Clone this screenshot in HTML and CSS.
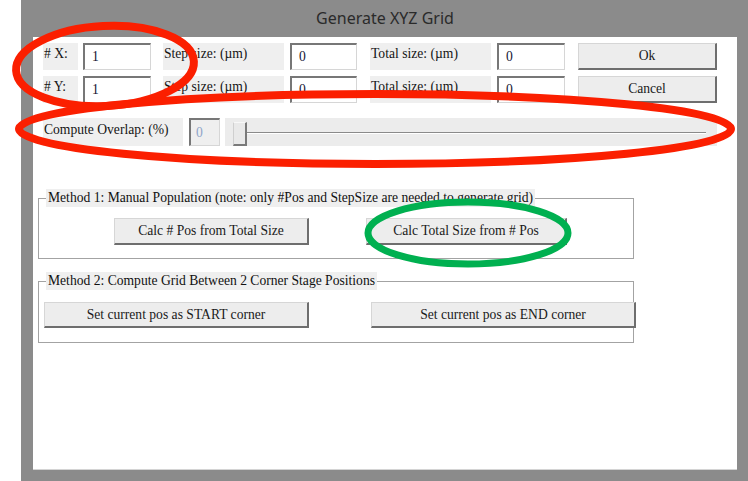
FILE: index.html
```html
<!DOCTYPE html>
<html>
<head>
<meta charset="utf-8">
<title>Generate XYZ Grid</title>
<link rel="stylesheet" href="styles.css">
</head>
<body>
<div class="window">
  <div class="titlebar">Generate XYZ Grid</div>
  <div class="client">
    <div class="row">
      <div class="lbl lbl-n"># X:</div>
      <div class="inp inp-n">1</div>
      <div class="lbl lbl-s">Step size: (µm)</div>
      <div class="inp inp-s">0</div>
      <div class="lbl lbl-t">Total size: (µm)</div>
      <div class="inp inp-t">0</div>
      <div class="btn btn-ok">Ok</div>
    </div>
    <div class="row row2">
      <div class="lbl lbl-n"># Y:</div>
      <div class="inp inp-n">1</div>
      <div class="lbl lbl-s">Step size: (µm)</div>
      <div class="inp inp-s">0</div>
      <div class="lbl lbl-t">Total size: (µm)</div>
      <div class="inp inp-t">0</div>
      <div class="btn btn-ok">Cancel</div>
    </div>
    <div class="row row3">
      <div class="lbl lbl-ov">Compute Overlap: (%)</div>
      <div class="inp inp-ov">0</div>
      <div class="slider">
        <div class="thumb"></div>
        <div class="track"></div>
      </div>
    </div>

    <fieldset class="group group1">
      <legend>Method 1: Manual Population (note: only #Pos and StepSize are needed to generate grid)</legend>
      <div class="btnrow">
        <div class="btn btn-calc1">Calc # Pos from Total Size</div>
        <div class="btn btn-calc2">Calc Total Size from # Pos</div>
      </div>
    </fieldset>

    <fieldset class="group group2">
      <legend>Method 2: Compute Grid Between 2 Corner Stage Positions</legend>
      <div class="btnrow btnrow2">
        <div class="btn btn-corner">Set current pos as START corner</div>
        <div class="btn btn-corner btn-end">Set current pos as END corner</div>
      </div>
    </fieldset>
  </div>
</div>

<svg class="marks" width="748" height="481" viewBox="0 0 748 481">
  <ellipse cx="105" cy="66" rx="89" ry="40" transform="rotate(-3 105 66)" fill="none" stroke="#fb1f00" stroke-width="8"/>
  <ellipse cx="375" cy="129" rx="356" ry="35" fill="none" stroke="#fb1f00" stroke-width="8"/>
  <ellipse cx="468" cy="233" rx="100" ry="31" fill="none" stroke="#00b050" stroke-width="7"/>
</svg>
</body>
</html>
```

FILE: styles.css
```css
html, body {
  margin: 0;
  padding: 0;
  background: #ffffff;
}

body {
  font-family: "Liberation Serif", "Times New Roman", serif;
  font-size: 13.6px;
  color: #1a1a1a;
}

.window {
  margin-left: 21px;
  width: 727px;
  height: 481px;
  box-sizing: border-box;
  background: #8b8b8b;
  padding: 0 11px 11px 12px;
  display: flex;
  flex-direction: column;
}

.titlebar {
  height: 37px;
  line-height: 37px;
  text-align: center;
  font-family: "Noto Sans", "Open Sans", sans-serif;
  font-size: 16px;
  color: #2a2a2a;
  flex-shrink: 0;
}

.client {
  flex: 1;
  background: #ffffff;
  border-bottom: 1px solid #d4d4d4;
  padding: 6px 0 0 10px;
}

.row {
  display: flex;
  height: 27px;
}

.row2 {
  margin-top: 6px;
}

.row3 {
  margin-top: 15px;
  height: 28px;
}

.lbl {
  background: #efefef;
  box-sizing: border-box;
  padding: 3px 0 0 1px;
  line-height: 15px;
  white-space: nowrap;
  overflow: hidden;
  color: #141414;
}

.inp {
  background: #ffffff;
  box-sizing: border-box;
  border-style: solid;
  border-width: 2px 1px 1px 2px;
  border-color: #777777 #d6d6d6 #d6d6d6 #777777;
  padding-left: 7px;
  line-height: 24px;
  color: #141432;
}

.lbl-n { width: 35px; margin-right: 5px; }
.inp-n { width: 68px; margin-right: 12px; }
.lbl-s { width: 121px; margin-right: 6px; }
.inp-s { width: 67px; margin-right: 13px; }
.lbl-t { width: 121px; margin-right: 6px; }
.inp-t { width: 68px; margin-right: 13px; }

.lbl-ov { width: 140px; margin-right: 6px; padding-top: 4px; }

.inp-ov {
  width: 31px;
  margin-right: 5px;
  background: #efefef;
  color: #8ea4c8;
  padding-left: 5px;
  line-height: 25px;
}

.btn {
  background: #ededed;
  box-sizing: border-box;
  border-style: solid;
  border-width: 1px 2px 2px 1px;
  border-color: #d6d6d6 #6e6e6e #6e6e6e #d6d6d6;
  text-align: center;
  line-height: 24px;
  color: #1a1a1a;
  white-space: nowrap;
  flex-shrink: 0;
}

.btn-ok { width: 139px; }

.slider {
  width: 492px;
  background: #ececec;
  display: flex;
}

.thumb {
  width: 14px;
  height: 24px;
  margin: 4px 0 0 8px;
  box-sizing: border-box;
  background: #e9e9e9;
  border-style: solid;
  border-width: 1px 2px 2px 1px;
  border-color: #f8f8f8 #7a7a7a #7a7a7a #cfcfcf;
  flex-shrink: 0;
}

.track {
  flex: 1;
  align-self: center;
  height: 2px;
  box-sizing: border-box;
  border-top: 1px solid #8a8a8a;
  border-bottom: 1px solid #ffffff;
  margin: 1px 11px 0 0;
}

.group {
  margin: 43px 0 0 -5px;
  width: 596px;
  box-sizing: border-box;
  border: 1px solid #a3a3a3;
  padding: 11px 0 13px 0;
  min-inline-size: 0;
}

.group legend {
  margin-left: 7px;
  padding: 0 2px;
  background: #efefef;
  line-height: 18px;
  height: 18px;
  color: #111111;
  white-space: nowrap;
}

.group2 {
  margin-top: 13px;
  padding: 12px 0 14px 0;
}

.btnrow {
  display: flex;
  height: 27px;
  padding-left: 75px;
}

.btn-calc1 { width: 195px; margin-right: 57px; }
.btn-calc2 { width: 201px; }

.btnrow2 {
  padding-left: 5px;
  height: 26px;
}

.btnrow2 .btn {
  line-height: 23px;
}

.btn-corner { width: 265px; }
.btn-end { margin-left: 62px; }

.marks {
  position: absolute;
  top: 0;
  left: 0;
  pointer-events: none;
}
```
